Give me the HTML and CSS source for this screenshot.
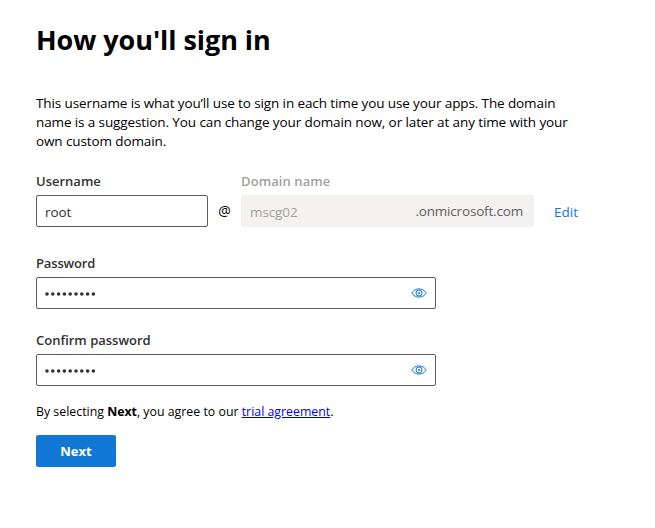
FILE: index.html
```html
<!DOCTYPE html>
<html lang="en">
<head>
<meta charset="utf-8">
<title>How you'll sign in</title>
<link rel="stylesheet" href="styles.css">
</head>
<body>
<main class="signup">
  <h1 class="title">How you'll sign in</h1>
  <p class="intro">This username is what you’ll use to sign in each time you use your apps. The domain<br>name is a suggestion. You can change your domain now, or later at any time with your<br>own custom domain.</p>
  <div class="account">
    <div class="user">
      <label class="label" for="username">Username</label>
      <div class="field"><input class="input" id="username" type="text" value="root"></div>
    </div>
    <span class="at">@</span>
    <div class="domain">
      <label class="label label-domain" for="domain">Domain name</label>
      <div class="field field-disabled"><input class="input input-disabled" id="domain" type="text" value="mscg02" disabled><span class="suffix">.onmicrosoft.com</span></div>
    </div>
    <a class="edit">Edit</a>
  </div>
  <div class="secret">
    <span class="label label-secret">Password</span>
    <div class="field"><svg class="dots" viewBox="0 0 52 4"><path d="M2 2h46.500"/></svg>
      <svg class="eye" viewBox="0 0 16 10"><path d="M.8 5C2.4 2.3 5 .9 8 .9S13.6 2.3 15.2 5C13.6 7.7 11 9.1 8 9.1S2.4 7.7.8 5Z"/><circle cx="8" cy="5" r="3"/><circle class="pupil" cx="8" cy="5" r="1"/></svg></div>
  </div>
  <div class="secret secret-confirm">
    <span class="label">Confirm password</span>
    <div class="field"><svg class="dots" viewBox="0 0 52 4"><path d="M2 2h46.500"/></svg>
      <svg class="eye" viewBox="0 0 16 10"><path d="M.8 5C2.4 2.3 5 .9 8 .9S13.6 2.3 15.2 5C13.6 7.7 11 9.1 8 9.1S2.4 7.7.8 5Z"/><circle cx="8" cy="5" r="3"/><circle class="pupil" cx="8" cy="5" r="1"/></svg></div>
  </div>
  <p class="terms">By selecting <b>Next</b>, you agree to our <a class="agreement" href="#">trial agreement</a>.</p>
  <button class="next" type="button">Next</button>
</main>
</body>
</html>
```
FILE: styles.css
```css
* { box-sizing: border-box; }
body {
  margin: 0;
  background: #fff;
  color: #000;
  font: 13.5px/19px "Open Sans", "Noto Sans", sans-serif;
}
.signup { padding: 22px 0 0 36px; }
.title { margin: 0; font-size: 27px; line-height: 36px; font-weight: 700; letter-spacing: -0.05px; white-space: nowrap; }
.intro { margin: 36px 0 0; letter-spacing: -0.11px; white-space: nowrap; }
.account { display: flex; align-items: flex-end; margin-top: 20px; }
.user { width: 172px; }
.domain { width: 293px; }
.label { display: block; height: 24px; line-height: 20px; font-weight: 600; font-size: 13px; color: #323130; white-space: nowrap; }
.label-domain { color: #a19f9d; letter-spacing: 0.1px; }
.label-secret { letter-spacing: -0.15px; }
.field { display: flex; align-items: center; height: 32px; border: 1px solid #605e5c; border-radius: 2px; padding: 0 8px; }
.field-disabled { background: #f3f2f1; border-color: #f3f2f1; padding-right: 10px; }
.input { flex: 1; width: 0; padding: 2px 0 0; border: 0; outline: 0; background: transparent; font: inherit; letter-spacing: -0.1px; color: #323130; }
.input-disabled { color: #a19f9d; }
.suffix { color: #605e5c; line-height: 30px; letter-spacing: -0.18px; }
.at { width: 33px; text-align: center; font-size: 14px; line-height: 32px; }
.edit { margin-left: 20px; padding-top: 1px; line-height: 31px; height: 31px; color: #1078d4; }
.secret { width: 400px; margin-top: 26px; }
.secret-confirm { margin-top: 21px; }
.dots { width: 52px; height: 4px; margin: 2px auto 0 0; fill: none; stroke: #323130; stroke-width: 3.6; stroke-linecap: round; stroke-dasharray: 0 5.8; }
.eye { width: 16px; height: 10px; margin-right: 0.5px; fill: none; stroke: #1078d4; stroke-width: 1; }
.pupil { fill: #1078d4; stroke: none; }
.terms { margin: 16px 0 0; font-size: 12.35px; white-space: nowrap; }
.agreement { color: #0000ee; }
.next { display: block; width: 80px; height: 32px; margin-top: 14px; padding: 0; border: 0; border-radius: 2px; background: #1078d4; color: #fff; font: 700 13px/32px "Open Sans", sans-serif; }
```
